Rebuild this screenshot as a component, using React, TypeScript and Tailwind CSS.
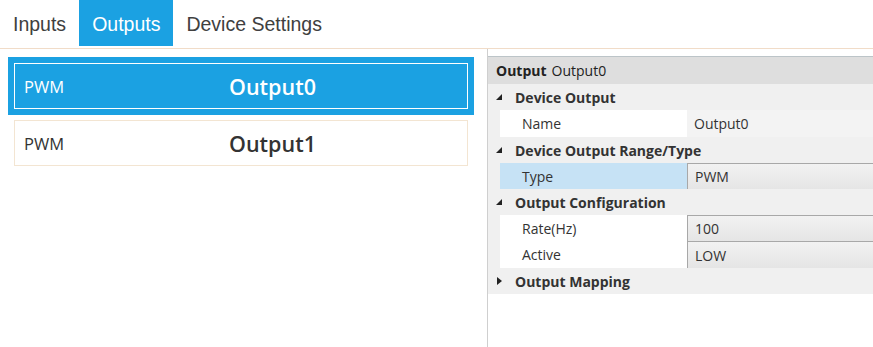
import React from 'react';

interface OutputItem {
  type: string;
  name: string;
}

const outputs: OutputItem[] = [
  { type: 'PWM', name: 'Output0' },
  { type: 'PWM', name: 'Output1' },
];

const tabs = ['Inputs', 'Outputs', 'Device Settings'];

const Expanded = () => (
  <svg width="8" height="8" viewBox="0 0 8 8" className="shrink-0">
    <path d="M7 1 L7 7 L1 7 Z" fill="#222" />
  </svg>
);

const Collapsed = () => (
  <svg width="8" height="10" viewBox="0 0 8 10" className="shrink-0">
    <path d="M2 1 L7 5 L2 9 Z" fill="#222" />
  </svg>
);

const Category: React.FC<{ label: string; open?: boolean }> = ({ label, open = true }) => (
  <div className="flex h-[26px] items-center bg-[#f0f0f0] pl-[7px]">
    <div className="flex w-[20px] items-center">{open ? <Expanded /> : <Collapsed />}</div>
    <span className="font-bold text-[#333]">{label}</span>
  </div>
);

const PropRow: React.FC<{ label: string; value: string; selected?: boolean; boxed?: boolean; tall?: boolean }> = ({
  label,
  value,
  selected,
  boxed,
  tall,
}) => (
  <div className={`flex bg-[#f0f0f0] pl-[12px] ${tall ? 'h-[27px]' : 'h-[26px]'}`}>
    <div
      className={`flex w-[187px] items-center pl-[22px] text-[#333] ${selected ? 'bg-[#c6e2f5]' : 'bg-white'}`}
    >
      {label}
    </div>
    <div
      className={`flex flex-1 items-center pl-[7px] text-[#333] ${
        boxed
          ? 'border-t border-l border-[#a8a8a8] bg-gradient-to-b from-[#f2f2f2] to-[#e5e5e5]'
          : 'bg-[#f3f3f3]'
      }`}
    >
      {value}
    </div>
  </div>
);

export default function App() {
  return (
    <div className="h-[347px] w-[873px] overflow-hidden bg-white font-['Open_Sans',sans-serif]">
      {/* Tab strip */}
      <div className="h-[49px] border-b border-[#f1dcc8]">
        <div className="flex h-[46px] font-['Liberation_Sans',Arial,sans-serif] text-[19.5px]">
          {tabs.map((t) => (
            <div
              key={t}
              className={`flex items-center px-[13px] pt-[3px] ${
                t === 'Outputs' ? 'bg-[#1ba1e2] text-white' : 'text-[#404040]'
              }`}
            >
              {t}
            </div>
          ))}
        </div>
      </div>

      <div className="flex h-[298px]">
        {/* Output list */}
        <div className="w-[488px] shrink-0 border-r border-[#cfcfcf] pt-[8px] pl-[8px]">
          {outputs.map((o, i) => {
            const sel = i === 0;
            return (
              <div key={o.name} className={`w-[466px] p-[6px] ${sel ? 'bg-[#1ba1e2]' : '-mt-px'}`}>
                <div
                  className={`flex h-[46px] items-center border pt-[3px] pl-[9px] ${
                    sel ? 'border-white text-white' : 'border-[#f3e5d2] text-[#333]'
                  }`}
                >
                  <span className="w-[205px] text-[16.5px]">{o.type}</span>
                  <span className="text-[21.5px] font-semibold">{o.name}</span>
                </div>
              </div>
            );
          })}
        </div>

        {/* Property grid */}
        <div className="flex-1 pt-[7px] text-[14px]">
          <div className="flex h-[28px] items-center border-t border-[#bcc4c8] bg-[#dedede] pl-[8px] text-[#222]">
            <span className="font-bold">Output</span>
            <span className="ml-[5px]">Output0</span>
          </div>
          <Category label="Device Output" />
          <PropRow label="Name" value="Output0" tall />
          <Category label="Device Output Range/Type" />
          <PropRow label="Type" value="PWM" selected boxed />
          <Category label="Output Configuration" />
          <PropRow label="Rate(Hz)" value="100" boxed />
          <PropRow label="Active" value="LOW" boxed tall />
          <Category label="Output Mapping" open={false} />
        </div>
      </div>
    </div>
  );
}
